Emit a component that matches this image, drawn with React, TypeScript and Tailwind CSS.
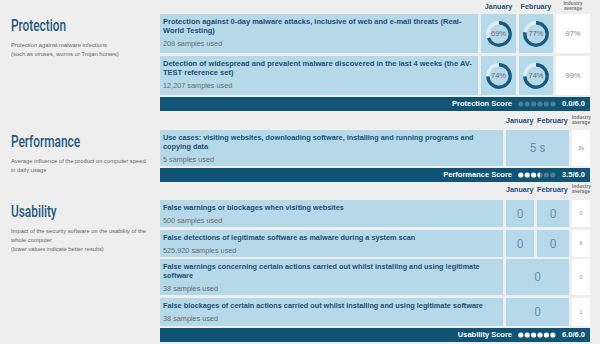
import React from "react";

type Row = { title: string; samples: string; h: string };

function Donut({ pct }: { pct: number }) {
  const r = 11.2;
  const c = 2 * Math.PI * r;
  return (
    <div className="relative h-[26px] w-[26px]">
      <svg viewBox="0 0 26 26" className="h-full w-full -rotate-90">
        <circle cx="13" cy="13" r={r} fill="none" stroke="#dcedf6" strokeWidth="3.4" />
        <circle
          cx="13"
          cy="13"
          r={r}
          fill="none"
          stroke="#1a5a7f"
          strokeWidth="3.4"
          strokeDasharray={`${(c * pct) / 100} ${c}`}
        />
      </svg>
      <span className="absolute inset-0 flex items-center justify-center text-[7.5px] text-[#6b6b6b]">
        {pct}%
      </span>
    </div>
  );
}

function Dots({ score }: { score: number }) {
  return (
    <svg width="38" height="6" viewBox="0 0 38 6">
      {[0, 1, 2, 3, 4, 5].map((i) => {
        const cx = 2.8 + i * 6.4;
        const fill = Math.max(0, Math.min(1, score - i));
        return (
          <g key={i}>
            <circle cx={cx} cy="3" r="2.6" fill={fill >= 1 ? "#ffffff" : "#4d7d9b"} />
            {fill > 0 && fill < 1 && (
              <path d={`M${cx} 0.4 A2.6 2.6 0 0 0 ${cx} 5.6 Z`} fill="#ffffff" />
            )}
          </g>
        );
      })}
    </svg>
  );
}

function ScoreBar({ label, score }: { label: string; score: number }) {
  return (
    <div className="flex h-[14px] shrink-0 items-center justify-end gap-[6px] bg-[#0f5475] pr-[5px] text-[7.5px] font-bold text-white">
      <span>{label}</span>
      <Dots score={score} />
      <span>{score.toFixed(1)}/6.0</span>
    </div>
  );
}

function Industry() {
  return (
    <span className="block text-center text-[4.8px] leading-[5px] text-[#777]">
      Industry
      <br />
      average
    </span>
  );
}

function TextCell({ row, big }: { row: Row; big?: boolean }) {
  return (
    <div className="flex-1 bg-[#b6d9ea] px-[3px] pt-[3px]">
      <p
        className={`${big ? "text-[7.5px]" : "text-[7.3px]"} font-bold leading-[9px] text-[#1e4f73]`}
      >
        {row.title}
      </p>
      <p className="mt-[4px] text-[7.3px] leading-[9px] text-[#6a6a6a]">{row.samples}</p>
    </div>
  );
}

function Left({ title, children }: { title: string; children: React.ReactNode }) {
  return (
    <div className="w-[160px] shrink-0 pl-[11px] pr-[12px]">
      <h2 className="inline-block origin-left scale-x-[0.74] font-['Roboto',sans-serif] text-[16px] font-medium leading-[16px] text-[#22597d]">
        {title}
      </h2>
      <p className="mt-[3px] text-[5.8px] leading-[9px] text-[#666]">{children}</p>
    </div>
  );
}

const protection: (Row & { jan: number; feb: number; ind: string })[] = [
  {
    title:
      "Protection against 0-day malware attacks, inclusive of web and e-mail threats (Real-\u200BWorld Testing)",
    samples: "208 samples used",
    h: "h-[39px]",
    jan: 69,
    feb: 77,
    ind: "97%",
  },
  {
    title:
      "Detection of widespread and prevalent malware discovered in the last 4 weeks (the AV-\u200BTEST reference set)",
    samples: "12,207 samples used",
    h: "h-[39px]",
    jan: 74,
    feb: 74,
    ind: "99%",
  },
];

const usability: (Row & { jan?: string; feb?: string; both?: string; ind: string })[] = [
  {
    title: "False warnings or blockages when visiting websites",
    samples: "500 samples used",
    h: "h-[27px]",
    jan: "0",
    feb: "0",
    ind: "0",
  },
  {
    title: "False detections of legitimate software as malware during a system scan",
    samples: "525,920 samples used",
    h: "h-[27px]",
    jan: "0",
    feb: "0",
    ind: "6",
  },
  {
    title:
      "False warnings concerning certain actions carried out whilst installing and using legitimate software",
    samples: "38 samples used",
    h: "h-[36px]",
    both: "0",
    ind: "0",
  },
  {
    title: "False blockages of certain actions carried out whilst installing and using legitimate software",
    samples: "38 samples used",
    h: "h-[28px]",
    both: "0",
    ind: "1",
  },
];

const VALUE = "text-[12px] font-['Roboto',sans-serif] text-[#6891ad]";

export default function App() {
  return (
    <div className="h-[344px] w-[600px] overflow-hidden bg-[#eeeeee] pr-[10px] font-['Liberation_Sans',Arial,sans-serif]">
      {/* Protection */}
      <div className="flex h-[14px] items-end justify-end gap-[3px] pb-[3px] text-[7.2px] font-bold leading-[8px] text-[#1e4f73]">
        <span className="w-[35px] text-center">January</span>
        <span className="w-[34px] text-center">February</span>
        <span className="w-[34px]">
          <Industry />
        </span>
      </div>
      <div className="flex">
        <Left title="Protection">
          Protection against malware infections
          <br />
          (such as viruses, worms or Trojan horses)
        </Left>
        <div className="flex flex-1 flex-col">
          {protection.map((r, i) => (
            <div key={i} className={`flex gap-[3px] ${r.h} ${i > 0 ? "mt-[3px]" : ""}`}>
              <TextCell row={r} big />
              <div className="flex w-[35px] items-center justify-center bg-[#b6d9ea]">
                <Donut pct={r.jan} />
              </div>
              <div className="flex w-[34px] items-center justify-center bg-[#b6d9ea]">
                <Donut pct={r.feb} />
              </div>
              <div className="flex w-[34px] items-center justify-center bg-white text-[7.5px] text-[#8a8a8a]">
                {r.ind}
              </div>
            </div>
          ))}
          <div className="mt-[2px]">
            <ScoreBar label="Protection Score" score={0} />
          </div>
        </div>
      </div>

      {/* Performance */}
      <div className="flex h-[19px] items-end justify-end gap-[3px] pb-[5px] text-[7.2px] font-bold leading-[8px] text-[#1e4f73]">
        <span className="w-[28px] whitespace-nowrap">January</span>
        <span className="w-[32px] whitespace-nowrap">February</span>
        <span className="w-[18px]">
          <Industry />
        </span>
      </div>
      <div className="flex">
        <Left title="Performance">
          Average influence of the product on computer speed in daily usage
        </Left>
        <div className="flex flex-1 flex-col">
          <div className="flex h-[36px] gap-[3px]">
            <TextCell
              row={{
                title:
                  "Use cases: visiting websites, downloading software, installing and running programs and copying data",
                samples: "5 samples used",
                h: "",
              }}
            />
            <div className={`flex w-[63px] items-center justify-center bg-[#b6d9ea] ${VALUE}`}>5 s</div>
            <div className="flex w-[18px] items-center justify-center bg-white text-[5.5px] text-[#8a8a8a]">
              3s
            </div>
          </div>
          <div className="mt-[2px]">
            <ScoreBar label="Performance Score" score={3.5} />
          </div>
        </div>
      </div>

      {/* Usability */}
      <div className="flex h-[18px] items-end justify-end gap-[3px] pb-[6px] text-[7.2px] font-bold leading-[8px] text-[#1e4f73]">
        <span className="w-[28px] whitespace-nowrap">January</span>
        <span className="w-[32px] whitespace-nowrap">February</span>
        <span className="w-[18px]">
          <Industry />
        </span>
      </div>
      <div className="flex">
        <Left title="Usability">
          Impact of the security software on the usability of the whole computer
          <br />
          (lower values indicate better results)
        </Left>
        <div className="flex flex-1 flex-col">
          {usability.map((r, i) => (
            <div
              key={i}
              className={`flex gap-[3px] ${r.h} ${i === 0 ? "" : i === 2 ? "mt-[2px]" : "mt-[3px]"}`}
            >
              <TextCell row={r} />
              {r.both ? (
                <div className={`flex w-[63px] items-center justify-center bg-[#b6d9ea] ${VALUE}`}>
                  {r.both}
                </div>
              ) : (
                <>
                  <div className={`flex w-[28px] items-center justify-center bg-[#b6d9ea] ${VALUE}`}>
                    {r.jan}
                  </div>
                  <div className={`flex w-[32px] items-center justify-center bg-[#b6d9ea] ${VALUE}`}>
                    {r.feb}
                  </div>
                </>
              )}
              <div className="flex w-[18px] items-center justify-center bg-white text-[5.5px] text-[#8a8a8a]">
                {r.ind}
              </div>
            </div>
          ))}
          <div className="mt-[2px]">
            <ScoreBar label="Usability Score" score={6} />
          </div>
        </div>
      </div>
    </div>
  );
}
